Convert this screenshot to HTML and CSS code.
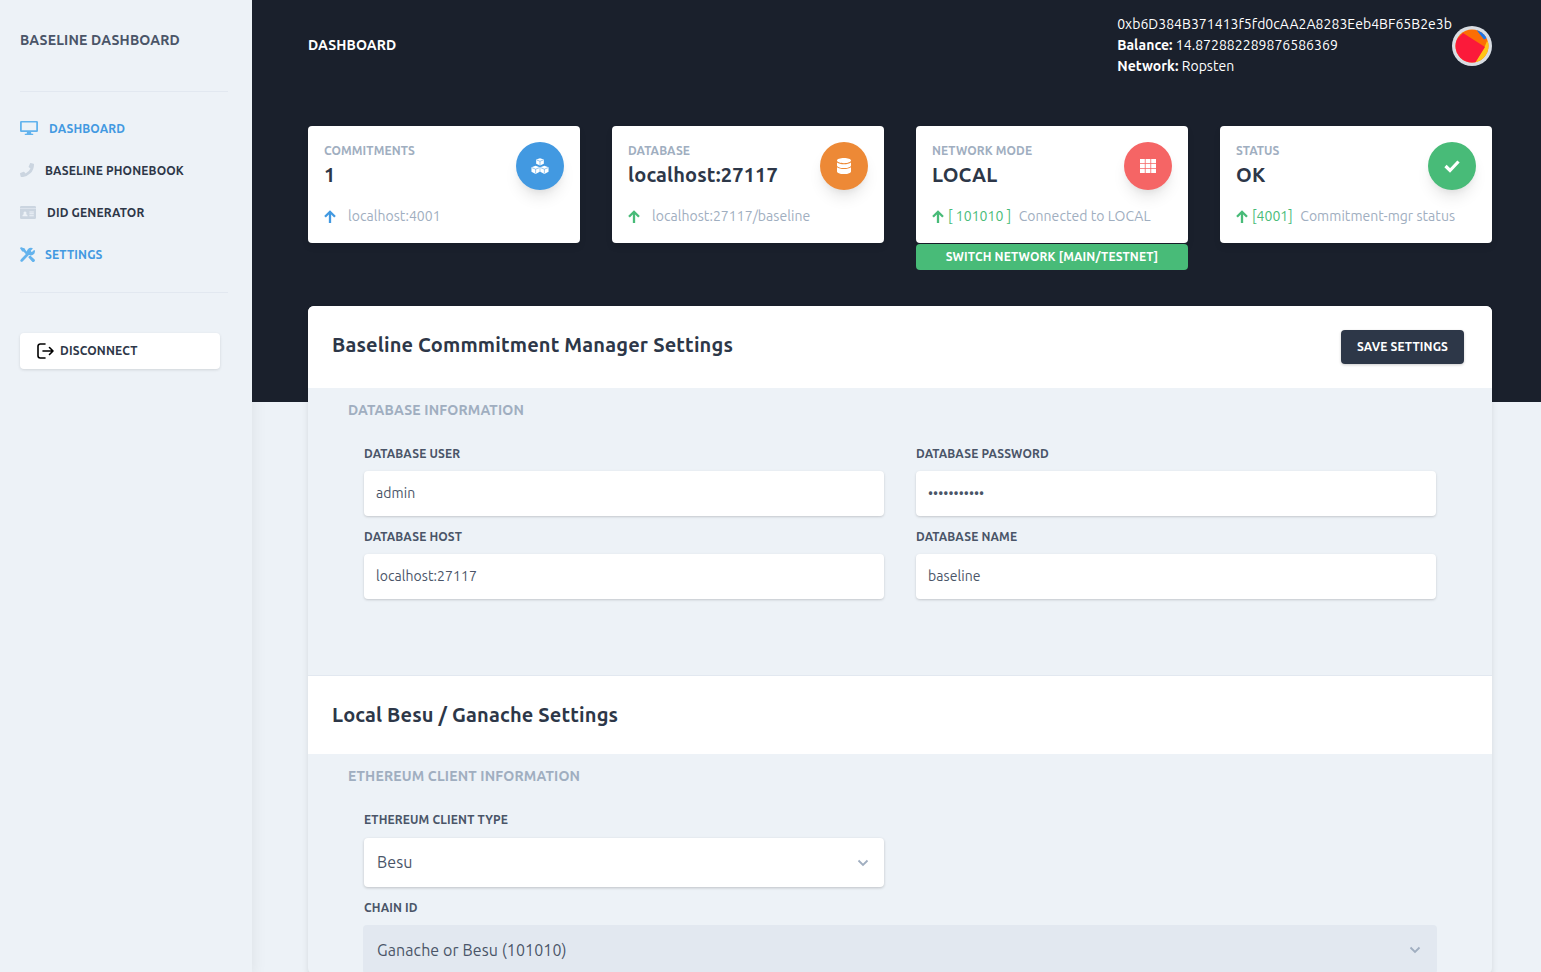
FILE: index.html
```html
<!DOCTYPE html>
<html lang="en">
<head>
  <meta charset="UTF-8" />
  <meta name="viewport" content="width=device-width, initial-scale=1.0"/>
  <title>Baseline Dashboard</title>
  <link rel="stylesheet" href="styles.css">
</head>
<body>
  <aside class="sidebar">
    <div class="brand">BASELINE DASHBOARD</div>
    <hr class="rule rule-top">
    <nav class="nav">
      <a class="nav-item active">
        <svg class="nav-icon icon-desktop" viewBox="0 0 18 14"><path fill="#63b3ed" d="M1.300 0h15.400A1.300 1.300 0 0 1 18 1.300v8.400A1.300 1.300 0 0 1 16.700 11H11l.4 1.700h1.800V14H4.800v-1.300h1.800L7 11H1.300A1.300 1.300 0 0 1 0 9.700V1.300A1.300 1.300 0 0 1 1.300 0zm.5 1.600v7.700h14.400V1.600z"/></svg>
        <span class="nav-text gap-desktop">DASHBOARD</span>
      </a>
      <a class="nav-item">
        <svg class="nav-icon icon-phone" viewBox="0 0 14 14"><path fill="#cbd5e0" d="M13.600.700 10.800 0a.7.7 0 0 0-.8.400L8.700 3.500a.7.7 0 0 0 .2.800l1.600 1.300a10 10 0 0 1-4.900 4.900L4.300 8.900a.7.7 0 0 0-.8-.2L.4 10a.7.7 0 0 0-.4.800l.7 2.800a.7.7 0 0 0 .7.500A12.600 12.600 0 0 0 14 1.400a.7.7 0 0 0-.4-.7z"/></svg>
        <span class="nav-text dark gap-phone">BASELINE PHONEBOOK</span>
      </a>
      <a class="nav-item">
        <svg class="nav-icon icon-card" viewBox="0 0 16 13"><path fill="#cbd5e0" d="M1.300 0h13.400A1.300 1.300 0 0 1 16 1.300v10.400a1.300 1.300 0 0 1-1.300 1.300H1.300A1.300 1.300 0 0 1 0 11.700V1.300A1.300 1.300 0 0 1 1.300 0z"/><path fill="#edf2f7" d="M0 2.400h16v.7H0zM5 5.400a1.500 1.500 0 1 1-.01 0zM2.400 10.200c0-1.300 1-2.100 2.600-2.100s2.600.8 2.600 2.100zM9.400 5.400h4.400v1H9.400zM9.400 7.300h4.400v1H9.400zM9.400 9.200h4.400v1H9.400z"/></svg>
        <span class="nav-text dark gap-card">DID GENERATOR</span>
      </a>
      <a class="nav-item active">
        <svg class="nav-icon icon-tools" viewBox="0 0 14 14"><path fill="#63b3ed" stroke="#63b3ed" stroke-width="1.200" stroke-linejoin="round" d="M1 .8.700 1.100l1.700 2.500 1.300.2L6 6.300l.8-.8-2.400-2.400-.2-1.200zM13.300 3.500l-1.700 1.700-1.800-.3-.3-1.800L11.200 1.400a3.200 3.200 0 0 0-3.900 4.200L1.100 12a.7.7 0 0 0 0 1 .7.700 0 0 0 .9 0l6.300-6.400a3.200 3.200 0 0 0 5-3.100zM8.400 9.500l3.300 3.700a.9.9 0 0 0 1.300-1.300L9.400 8.500z"/></svg>
        <span class="nav-text gap-tools">SETTINGS</span>
      </a>
    </nav>
    <hr class="rule rule-bottom">
    <button class="disconnect">
      <svg class="disconnect-icon" viewBox="0 0 17 16"><path fill="none" stroke="#000" stroke-width="1.600" stroke-linecap="round" stroke-linejoin="round" d="M8 1H3.200A2.200 2.200 0 0 0 1 3.200v9.600A2.200 2.200 0 0 0 3.200 15H8M6 8H16M12.500 4.500 16 8l-3.500 3.500"/></svg>
      DISCONNECT
    </button>
  </aside>

  <div class="content">
    <div class="backdrop"></div>

    <header class="topbar">
      <div class="topbar-title">DASHBOARD</div>
      <div class="account">
        <div class="account-info">
          <div>0xb6D384B371413f5fd0cAA2A8283Eeb4BF65B2e3b</div>
          <div><b>Balance:</b> 14.872882289876586369</div>
          <div><b>Network:</b> Ropsten</div>
        </div>
        <svg class="avatar" viewBox="0 0 40 40">
          <circle cx="20" cy="20" r="20" fill="#d9dde3"/>
          <clipPath id="avatar-clip"><circle cx="20" cy="20" r="16.500"/></clipPath>
          <g clip-path="url(#avatar-clip)">
            <rect width="40" height="40" fill="#fc6e04"/>
            <path fill="#ffc516" d="M23 37 33 20 35 15 40 20V40z"/>
            <path fill="#1a73e8" d="M23 2 31 2 37 11 32 13.500z"/>
            <path fill="#fb1a3a" d="M0 17 4 14 11 7 33 21 23 37 20 40H0z"/>
          </g>
        </svg>
      </div>
    </header>

    <section class="cards">
      <div class="card-col">
        <div class="card">
          <div class="card-main">
            <div>
              <div class="card-label">COMMITMENTS</div>
              <div class="card-value">1</div>
            </div>
            <div class="badge blue">
              <svg class="icon-cubes" viewBox="0 0 16 14"><path fill="#fff" d="M8 0l3.400 1.300v3.700L8 6.500 4.600 5V1.300zM4.100 6.800l3.700 1.400v3.800L4.100 14 .4 12V8.200zM11.900 6.800l3.700 1.400V12l-3.700 2-3.700-2V8.200z"/><path fill="none" stroke="#4299e1" stroke-width=".5" d="M5 1.600 8 2.800l3-1.200M8 2.800v3.400M.8 8.500l3.300 1.300 3.300-1.300M4.100 9.800v3.800M8.600 8.500l3.300 1.300 3.300-1.300M11.900 9.800v3.800"/></svg>
            </div>
          </div>
          <div class="card-foot">
            <svg class="arrow" viewBox="0 0 12 13"><path fill="none" stroke="#4299e1" stroke-width="2.300" d="M6 13V2M1 6.800 6 1.800 11 6.800"/></svg>
            <span class="foot-note wide">localhost:4001</span>
          </div>
        </div>
      </div>

      <div class="card-col">
        <div class="card">
          <div class="card-main">
            <div>
              <div class="card-label">DATABASE</div>
              <div class="card-value">localhost:27117</div>
            </div>
            <div class="badge orange">
              <svg viewBox="0 0 14 16"><path fill="#fff" d="M7 0c3.900 0 7 1.100 7 2.600S10.900 5.200 7 5.200 0 4.100 0 2.600 3.100 0 7 0zM0 4.400C1.500 5.600 4.200 6.200 7 6.200s5.500-.6 7-1.800v3C14 8.900 10.900 10 7 10S0 8.900 0 7.400zM0 9.300c1.500 1.200 4.200 1.800 7 1.800s5.500-.6 7-1.800v4.100C14 14.900 10.900 16 7 16s-7-1.100-7-2.600z"/></svg>
            </div>
          </div>
          <div class="card-foot">
            <svg class="arrow" viewBox="0 0 12 13"><path fill="none" stroke="#48bb78" stroke-width="2.300" d="M6 13V2M1 6.800 6 1.800 11 6.800"/></svg>
            <span class="foot-note wide">localhost:27117/baseline</span>
          </div>
        </div>
      </div>

      <div class="card-col">
        <div class="card">
          <div class="card-main">
            <div>
              <div class="card-label">NETWORK MODE</div>
              <div class="card-value">LOCAL</div>
            </div>
            <div class="badge red">
              <svg viewBox="0 0 16 14"><path fill="#fff" d="M0 0h4.800v4.200H0zM5.600 0h4.800v4.200H5.600zM11.200 0H16v4.200h-4.800zM0 5h4.800v4H0zM5.600 5h4.800v4H5.600zM11.200 5H16v4h-4.800zM0 9.800h4.800V14H0zM5.600 9.800h4.800V14H5.600zM11.200 9.800H16V14h-4.800z"/></svg>
            </div>
          </div>
          <div class="card-foot">
            <svg class="arrow" viewBox="0 0 12 13"><path fill="none" stroke="#48bb78" stroke-width="2.300" d="M6 13V2M1 6.800 6 1.800 11 6.800"/></svg>
            <span class="foot-code">[ 101010 ]</span>
            <span class="foot-note">Connected to LOCAL</span>
          </div>
        </div>
        <button class="switch-btn">SWITCH NETWORK [MAIN/TESTNET]</button>
      </div>

      <div class="card-col">
        <div class="card">
          <div class="card-main">
            <div>
              <div class="card-label">STATUS</div>
              <div class="card-value">OK</div>
            </div>
            <div class="badge green">
              <svg viewBox="0 0 16 13"><path fill="none" stroke="#fff" stroke-width="3.200" d="M1.500 6.500 6 11 14.500 2"/></svg>
            </div>
          </div>
          <div class="card-foot">
            <svg class="arrow" viewBox="0 0 12 13"><path fill="none" stroke="#48bb78" stroke-width="2.300" d="M6 13V2M1 6.800 6 1.800 11 6.800"/></svg>
            <span class="foot-code">[4001]</span>
            <span class="foot-note">Commitment-mgr status</span>
          </div>
        </div>
      </div>
    </section>

    <main class="panel">
      <div class="panel-head">
        <h2>Baseline Commmitment Manager Settings</h2>
        <button class="save-btn">SAVE SETTINGS</button>
      </div>
      <div class="panel-body body-db">
        <h3>DATABASE INFORMATION</h3>
        <div class="form-grid">
          <div class="field">
            <label>DATABASE USER</label>
            <input class="input" type="text" value="admin">
          </div>
          <div class="field">
            <label>DATABASE PASSWORD</label>
            <input class="input" type="password" value="secretvalue">
          </div>
          <div class="field">
            <label>DATABASE HOST</label>
            <input class="input" type="text" value="localhost:27117">
          </div>
          <div class="field">
            <label>DATABASE NAME</label>
            <input class="input" type="text" value="baseline">
          </div>
        </div>
      </div>

      <div class="panel-head panel-head-second">
        <h2>Local Besu / Ganache Settings</h2>
      </div>
      <div class="panel-body body-eth">
        <h3>ETHEREUM CLIENT INFORMATION</h3>
        <div class="form-grid">
          <div class="field">
            <label>ETHEREUM CLIENT TYPE</label>
            <div class="select">
              Besu
              <svg class="chevron" viewBox="0 0 12 8"><path fill="none" stroke="#a0aec0" stroke-width="1.800" d="M1.500 1.500 6 6l4.500-4.500"/></svg>
            </div>
          </div>
          <div class="field-full">
            <label>CHAIN ID</label>
            <div class="select select-disabled">
              Ganache or Besu (101010)
              <svg class="chevron" viewBox="0 0 12 8"><path fill="none" stroke="#a0aec0" stroke-width="1.800" d="M1.500 1.500 6 6l4.500-4.500"/></svg>
            </div>
          </div>
        </div>
      </div>
    </main>
  </div>
</body>
</html>
```

FILE: styles.css
```css
* {
  box-sizing: border-box;
}

html,
body {
  height: 100%;
  margin: 0;
  overflow: hidden;
}

body {
  display: flex;
  font-family: "Ubuntu", "Noto Sans", "Open Sans", sans-serif;
  letter-spacing: 0.05px;
  background-color: #edf2f7;
  color: #2d3748;
}

/* Sidebar */
.sidebar {
  width: 252px;
  flex-shrink: 0;
  padding: 0 24px 0 20px;
  box-shadow: 0 4px 15px rgba(0, 0, 0, 0.08);
}

.brand {
  padding-top: 32px;
  height: 91px;
  font-size: 14px;
  line-height: 16px;
  font-weight: 700;
  letter-spacing: 0.17px;
  color: #4a5568;
}

.rule {
  margin: 0;
  border: 0;
  border-top: 1px solid #e2e8f0;
}

.nav {
  padding-top: 15px;
}

.nav-item {
  display: flex;
  align-items: center;
  height: 42px;
  font-size: 12px;
  font-weight: 700;
  letter-spacing: 0.15px;
  color: #4299e1;
}

.nav-text.dark {
  color: #2d3748;
}

.nav-icon {
  flex-shrink: 0;
}

.icon-desktop { width: 18px; height: 14px; }
.icon-phone { width: 14px; height: 14px; }
.icon-card { width: 16px; height: 13px; }
.icon-tools { width: 15px; height: 15px; }

.gap-desktop { margin-left: 11px; }
.gap-phone { margin-left: 11px; }
.gap-card { margin-left: 11px; }
.gap-tools { margin-left: 10px; }

.rule-bottom {
  margin-top: 17px;
}

.disconnect {
  display: flex;
  align-items: center;
  gap: 6px;
  width: 200px;
  height: 36px;
  margin-top: 40px;
  padding: 0 0 1px 17px;
  border: 0;
  border-radius: 4px;
  background-color: #fff;
  font-family: inherit;
  font-size: 12px;
  font-weight: 700;
  letter-spacing: 0.15px;
  color: #2d3748;
  box-shadow: 0 1px 3px rgba(0, 0, 0, 0.12);
}

.disconnect-icon {
  width: 17px;
  height: 16px;
}

/* Main column */
.content {
  position: relative;
  flex: 1;
  padding: 0 49px 0 56px;
}

.backdrop {
  position: absolute;
  top: 0;
  left: 0;
  right: 0;
  height: 402px;
  background-color: #1a202c;
}

.topbar,
.cards,
.panel {
  position: relative;
}

.topbar {
  display: flex;
  justify-content: space-between;
  height: 126px;
  color: #fff;
}

.topbar-title {
  padding-top: 37px;
  font-size: 14px;
  line-height: 16px;
  font-weight: 700;
  letter-spacing: 0.1px;
}

.account {
  display: flex;
  align-items: flex-start;
  padding-top: 14px;
}

.account-info {
  font-size: 14px;
  line-height: 21px;
  letter-spacing: 0.03px;
}

.avatar {
  width: 40px;
  height: 40px;
  margin-top: 12px;
}

/* Stat cards */
.cards {
  display: grid;
  grid-template-columns: repeat(4, 1fr);
  column-gap: 32px;
  height: 180px;
}

.card {
  height: 117px;
  padding: 17px 16px 16px;
  border-radius: 4px;
  background-color: #fff;
  box-shadow: 0 4px 6px rgba(0, 0, 0, 0.1);
}

.card-main {
  display: flex;
  justify-content: space-between;
  height: 63px;
}

.card-label {
  font-size: 12px;
  line-height: 16px;
  font-weight: 700;
  letter-spacing: 0.1px;
  color: #a0aec0;
}

.card-value {
  margin-top: 2px;
  font-size: 20px;
  line-height: 28px;
  font-weight: 700;
  letter-spacing: 0.15px;
  color: #2d3748;
}

.badge {
  display: flex;
  align-items: center;
  justify-content: center;
  width: 48px;
  height: 48px;
  margin-top: -1px;
  flex-shrink: 0;
  border-radius: 50%;
  box-shadow: 0 10px 15px -3px rgba(0, 0, 0, 0.1), 0 4px 6px -2px rgba(0, 0, 0, 0.05);
}

.badge svg {
  width: 16px;
  height: 16px;
}

.badge .icon-cubes {
  width: 18px;
  height: 16px;
}

.blue { background-color: #4299e1; }
.orange { background-color: #ed8936; }
.red { background-color: #f56565; }
.green { background-color: #48bb78; }

.card-foot {
  display: flex;
  align-items: center;
  height: 20px;
  font-size: 14px;
  color: #a0aec0;
}

.arrow {
  width: 12px;
  height: 13px;
  flex-shrink: 0;
}

.foot-code {
  margin-left: 4px;
  color: #48bb78;
}

.foot-note {
  margin-left: 7.5px;
}

.foot-note.wide {
  margin-left: 12px;
}

.switch-btn {
  display: block;
  width: 100%;
  height: 26px;
  margin-top: 1px;
  padding: 0 0 2px;
  border: 0;
  border-radius: 4px;
  background-color: #48bb78;
  font-family: inherit;
  font-size: 12px;
  font-weight: 700;
  letter-spacing: 0.15px;
  color: #fff;
}

/* Settings panel */
.panel {
  border-radius: 6px;
  background-color: #edf2f7;
  box-shadow: 0 4px 6px rgba(0, 0, 0, 0.1);
}

.panel-head {
  display: flex;
  align-items: center;
  justify-content: space-between;
  height: 82px;
  padding: 0 28px 4px 24px;
  background-color: #fff;
  border-radius: 6px 6px 0 0;
}

.panel-head-second {
  height: 79px;
  padding-bottom: 0;
  border-top: 1px solid #e2e8f0;
  border-radius: 0;
}

.panel-head h2 {
  margin: 0;
  font-size: 20px;
  line-height: 28px;
  font-weight: 700;
  letter-spacing: 0.16px;
  color: #2d3748;
}

.save-btn {
  width: 123px;
  height: 34px;
  margin-top: 4px;
  padding: 0 0 2px;
  border: 0;
  border-radius: 4px;
  background-color: #2d3748;
  font-family: inherit;
  font-size: 12px;
  font-weight: 700;
  letter-spacing: 0.15px;
  color: #fff;
  box-shadow: 0 1px 3px rgba(0, 0, 0, 0.2);
}

.panel-body {
  padding: 12px 56px 0;
}

.body-db {
  height: 287px;
}

.panel-body h3 {
  margin: 0 0 0 -16px;
  font-size: 14px;
  line-height: 20px;
  font-weight: 700;
  letter-spacing: 0.17px;
  color: #a0aec0;
}

.form-grid {
  display: grid;
  grid-template-columns: repeat(2, 1fr);
  column-gap: 32px;
  margin-top: 26px;
}

.field-full {
  grid-column: 1 / -1;
}

.field label,
.field-full label {
  display: block;
  height: 16px;
  margin-bottom: 9px;
  font-size: 12px;
  line-height: 16px;
  font-weight: 700;
  letter-spacing: 0.15px;
  color: #4a5568;
}

.body-eth .field label {
  margin-bottom: 10px;
}

.field {
  margin-bottom: 13px;
}

.input {
  display: block;
  width: 100%;
  height: 45px;
  padding: 0 12px 2px;
  border: 0;
  border-radius: 4px;
  background-color: #fff;
  font-family: inherit;
  font-size: 14px;
  letter-spacing: 0.07px;
  color: #4a5568;
  box-shadow: 0 1px 3px rgba(0, 0, 0, 0.12), 0 1px 2px rgba(0, 0, 0, 0.06);
}

.select {
  position: relative;
  display: flex;
  align-items: center;
  height: 49px;
  padding: 0 13px 2px;
  border-radius: 4px;
  background-color: #fff;
  font-size: 16px;
  letter-spacing: 0.1px;
  color: #4a5568;
  box-shadow: 0 1px 3px rgba(0, 0, 0, 0.2);
}

.select-disabled {
  margin-left: -1px;
  margin-right: -1px;
  padding: 0 14px;
  background-color: #e2e8f0;
  box-shadow: none;
}

.chevron {
  position: absolute;
  top: 21px;
  right: 15px;
  width: 12px;
  height: 8px;
}

.select-disabled .chevron {
  right: 16px;
}
```
